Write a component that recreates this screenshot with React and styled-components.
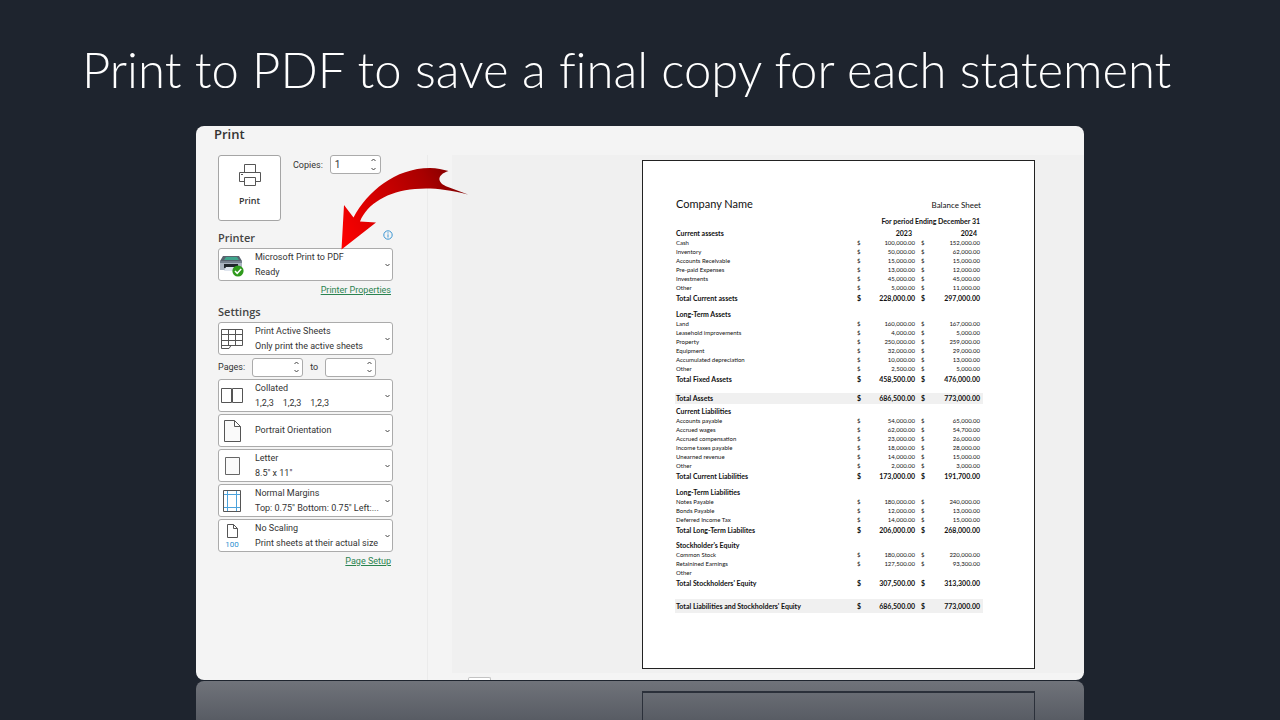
import React, { useState } from "react";
import styled, { createGlobalStyle } from "styled-components";

// styles
const GlobalStyle = createGlobalStyle`
  *, *::before, *::after {
    box-sizing: border-box;
  }
  body {
    margin: 0;
    background-color: #1e242e;
    font-family: "Open Sans", "Noto Sans", sans-serif;
  }
`;

const SlideStyle = styled.main`
  display: flex;
  flex-direction: column;
  height: 100vh;
  min-height: 700px;
  overflow: hidden;
  background-color: #1e242e;
`;

const TitleStyle = styled.h1`
  margin: 0;
  padding: 34px 82px 22px;
  font-family: Lato, sans-serif;
  font-size: 49px;
  font-weight: 300;
  font-variant-ligatures: none;
  line-height: 70px;
  white-space: nowrap;
  color: #ffffff;
`;

const WindowStyle = styled.section`
  position: relative;
  flex: none;
  display: flex;
  flex-direction: column;
  width: calc(100% - 32px);
  max-width: 888px;
  margin: 0 auto 1px;
  border-radius: 8px;
  overflow: hidden;
  background-color: #f4f4f4;
  color: #333333;
`;

const WindowTitleStyle = styled.h2`
  margin: 0;
  padding: 0 18px;
  height: 29px;
  font-size: 13px;
  font-weight: 600;
  line-height: 17px;
  color: #333333;
`;

const WindowBodyStyle = styled.div`
  display: flex;
`;

const SidebarStyle = styled.form`
  flex: none;
  display: flex;
  flex-direction: column;
  width: 232px;
  padding: 0 34px 0 22px;
  border-right: 1px solid #ebebeb;
  font-family: Roboto, "Open Sans", sans-serif;
`;

const PrintRowStyle = styled.div`
  display: flex;
  align-items: flex-start;
  gap: 12px;
`;

const PrintButtonStyle = styled.button`
  display: flex;
  flex-direction: column;
  align-items: center;
  gap: 7px;
  width: 63px;
  height: 66px;
  padding: 7px 0 0;
  border: 1px solid #a5a5a5;
  border-radius: 3px;
  background-color: #ffffff;
  font-family: "Open Sans", sans-serif;
  font-size: 9px;
  font-weight: 600;
  line-height: 14px;
  color: #333333;
`;

const FieldStyle = styled.div`
  display: flex;
  align-items: center;
  gap: 7px;
  font-size: 9px;
  line-height: 12px;
`;

const PagesStyle = styled(FieldStyle)`
  height: 24px;
`;

const SpinnerStyle = styled.div`
  display: flex;
  width: 51px;
  height: 19px;
  border: 1px solid #ababab;
  border-radius: 3px;
  overflow: hidden;
  background-color: #ffffff;
  input {
    flex: 1;
    min-width: 0;
    padding: 0 0 0 4px;
    border: none;
    outline: none;
    background: none;
    font-family: inherit;
    font-size: 10px;
    color: #333333;
    appearance: textfield;
  }
  input::-webkit-inner-spin-button {
    appearance: none;
    margin: 0;
  }
`;

const StepsStyle = styled.div`
  display: flex;
  flex-direction: column;
  button {
    display: flex;
    align-items: center;
    justify-content: center;
    flex: 1;
    width: 12px;
    padding: 0;
    border: none;
    background: none;
  }
`;

const HeadingRowStyle = styled.div`
  display: flex;
  justify-content: space-between;
  height: 20px;
  margin-top: ${(props) => props.$gap}px;
`;

const HeadingStyle = styled.h3`
  margin: 0;
  font-family: "Open Sans", sans-serif;
  font-size: 11px;
  font-weight: 600;
  line-height: 20px;
  color: #444444;
`;

const DropdownStyle = styled.div`
  display: grid;
  grid-template-columns: 26px 1fr 10px;
  align-items: center;
  height: 33px;
  margin-bottom: ${(props) => (props.$last ? 0 : 2)}px;
  border: 1px solid #ababab;
  border-radius: 3px;
  background-color: #ffffff;
  font-size: 9px;
  svg, p {
    pointer-events: none;
  }
  svg {
    grid-area: 1 / 1 / 2 / 2;
    justify-self: center;
    z-index: 1;
  }
  svg:last-child {
    grid-area: 1 / 3 / 2 / 4;
  }
  select {
    grid-area: 1 / 1 / 2 / 4;
    width: 100%;
    height: 100%;
    padding: 0 12px ${(props) => (props.$single ? 2 : 15)}px 36px;
    border: none;
    outline: none;
    appearance: none;
    background: none;
    font-family: inherit;
    font-size: inherit;
    line-height: 14px;
    color: inherit;
  }
  p {
    grid-area: 1 / 2 / 2 / 4;
    margin: 0;
    padding: 15px 0 0 10px;
    line-height: 14px;
    white-space: pre;
  }
`;

const LinkRowStyle = styled.div`
  display: flex;
  justify-content: flex-end;
  padding-right: 2px;
  a {
    font-size: 9px;
    line-height: 18px;
    color: #2b8350;
  }
`;

const PreviewStyle = styled.div`
  flex: 1;
  display: flex;
  flex-direction: column;
  padding-left: 24px;
`;

const PreviewAreaStyle = styled.div`
  display: flex;
  justify-content: flex-end;
  padding: 5px 49px 4px 24px;
  background-color: #f0f0f0;
`;

const PageTabStyle = styled.div`
  width: 23px;
  height: 3px;
  margin: 4px 0 0 16px;
  border: 1px solid #c3c3c3;
  border-bottom: none;
  border-radius: 2px 2px 0 0;
  background-color: #ffffff;
`;

const PaperStyle = styled.article`
  width: 393px;
  min-height: 509px;
  padding: 34px 51px 0 32px;
  border: 1px solid #222222;
  background-color: #ffffff;
  font-family: Lato, "Open Sans", sans-serif;
  color: #111111;
`;

const PaperHeadStyle = styled.header`
  display: flex;
  justify-content: space-between;
  align-items: baseline;
  padding: 0 2px 0 1px;
  h4, p {
    margin: 0;
    font-weight: 400;
    line-height: 17px;
  }
  h4 {
    font-size: 11px;
  }
  p {
    font-size: 8px;
  }
`;

const PeriodStyle = styled.p`
  margin: 0;
  padding-right: 3px;
  font-size: 7px;
  font-weight: 700;
  line-height: 14px;
  text-align: right;
`;

const TableStyle = styled.table`
  width: 100%;
  table-layout: fixed;
  border-collapse: collapse;
  th, td {
    padding: 0;
    white-space: nowrap;
  }
`;

const ROW_HEIGHTS = { head: 10, item: 9, total: 12, grand: 11, final: 14 };

const RowStyle = styled.tr`
  height: ${(props) => ROW_HEIGHTS[props.$kind]}px;
  background-color: ${(props) =>
    props.$kind === "grand" || props.$kind === "final" ? "#f0f0f0" : "transparent"};
  font-size: ${(props) => (props.$kind === "item" ? 6 : 7)}px;
  line-height: ${(props) => ROW_HEIGHTS[props.$kind]}px;
  th, td {
    font-weight: ${(props) => (props.$kind === "item" ? 400 : 700)};
  }
`;

const SpacerStyle = styled.tr`
  height: ${(props) => props.$size}px;
`;

const LabelStyle = styled.th`
  text-align: left;
  &&& {
    padding-left: 1px;
  }
`;

const SignStyle = styled.td`
  text-align: left;
  &&& {
    padding-left: ${(props) => props.$indent || 0}px;
  }
`;

const AmountStyle = styled.td`
  text-align: right;
  &&& {
    padding-right: ${(props) => props.$inset || 0}px;
  }
`;

const ArrowStyle = styled.svg`
  position: absolute;
  top: 38px;
  left: 140px;
  pointer-events: none;
`;

const ReflectionStyle = styled.div`
  flex: 1;
  display: flex;
  justify-content: flex-end;
  width: calc(100% - 32px);
  max-width: 888px;
  margin: 0 auto;
  padding: 10px 49px 0;
  border-radius: 8px 8px 0 0;
  background-image: linear-gradient(#70737a, #585c64);
`;

const ReflectedPaperStyle = styled.div`
  width: 393px;
  border: 1px solid #2b303a;
  border-top-width: 2px;
  border-bottom: none;
`;

// Component variables
const SETTINGS = [
  { label: "Collation", value: "Collated", detail: "1,2,3    1,2,3    1,2,3", icon: "collated" },
  { label: "Orientation", value: "Portrait Orientation", icon: "portrait" },
  { label: "Paper size", value: "Letter", detail: "8.5\" x 11\"", icon: "letter" },
  { label: "Margins", value: "Normal Margins", detail: "Top: 0.75\" Bottom: 0.75\" Left:...", icon: "margins" },
  { label: "Scaling", value: "No Scaling", detail: "Print sheets at their actual size", icon: "scaling" },
];

// [kind, label, 2023, 2024], a number stands for an empty row of that height
const ROWS = [
  ["item", "Cash", "100,000.00", "152,000.00"],
  ["item", "Inventory", "50,000.00", "62,000.00"],
  ["item", "Accounts Receivable", "15,000.00", "15,000.00"],
  ["item", "Pre-paid Expenses", "13,000.00", "12,000.00"],
  ["item", "Investments", "45,000.00", "45,000.00"],
  ["item", "Other", "5,000.00", "11,000.00"],
  ["total", "Total Current assets", "228,000.00", "297,000.00"],
  5,
  ["head", "Long-Term Assets"],
  ["item", "Land", "160,000.00", "167,000.00"],
  ["item", "Leasehold improvements", "4,000.00", "5,000.00"],
  ["item", "Property", "250,000.00", "259,000.00"],
  ["item", "Equipment", "32,000.00", "29,000.00"],
  ["item", "Accumulated depreciation", "10,000.00", "13,000.00"],
  ["item", "Other", "2,500.00", "5,000.00"],
  ["total", "Total Fixed Assets", "458,500.00", "476,000.00"],
  8,
  ["grand", "Total Assets", "686,500.00", "773,000.00"],
  2,
  ["head", "Current Liabilities"],
  ["item", "Accounts payable", "54,000.00", "65,000.00"],
  ["item", "Accrued wages", "62,000.00", "54,700.00"],
  ["item", "Accrued compensation", "23,000.00", "26,000.00"],
  ["item", "Income taxes payable", "18,000.00", "28,000.00"],
  ["item", "Unearned revenue", "14,000.00", "15,000.00"],
  ["item", "Other", "2,000.00", "3,000.00"],
  ["total", "Total Current Liabilities", "173,000.00", "191,700.00"],
  5,
  ["head", "Long-Term Liabilities"],
  ["item", "Notes Payable", "180,000.00", "240,000.00"],
  ["item", "Bonds Payable", "12,000.00", "13,000.00"],
  ["item", "Deferred Income Tax", "14,000.00", "15,000.00"],
  ["total", "Total Long-Term Liabilites", "206,000.00", "268,000.00"],
  4,
  ["head", "Stockholder's Equity"],
  ["item", "Common Stock", "180,000.00", "220,000.00"],
  ["item", "Retainined Earnings", "127,500.00", "93,300.00"],
  ["item", "Other"],
  ["total", "Total Stockholders' Equity", "307,500.00", "313,300.00"],
  10,
  ["final", "Total Liabilities and Stockholders' Equity", "686,500.00", "773,000.00"],
];

const ICONS = {
  printer: (
    <svg width="24" height="24" viewBox="0 0 24 24">
      <path d="M3 3h16l3 5H0z" fill="#59636e" />
      <path d="M6 4h11l2 3H4z" fill="#3fa58c" />
      <path d="M0 8h22v9H0z" fill="#aab3c0" />
      <path d="M0 8h22v2H0z" fill="#77818f" />
      <path d="M4 11h14v4H4z" fill="#20262c" />
      <path d="M6 14h10l1 4H4z" fill="#dfe5ee" />
      <circle cx="18" cy="18" r="5.600" fill="#2f9a1c" />
      <path d="M15 18l2.200 2.300 4-4.200" fill="none" stroke="#ffffff" strokeWidth="1.500" />
    </svg>
  ),
  sheets: (
    <svg width="22" height="20" viewBox="0 0 22 20" fill="none" stroke="#555555">
      <path d="M.5 .5h21v16H10l-2 3H.5zM.5 5.500h21M.5 11.500h21M7.500 .5v16M14.500 .5v16M.5 16.500H10" />
    </svg>
  ),
  collated: (
    <svg width="22" height="15" viewBox="0 0 22 15" fill="none" stroke="#555555">
      <path d="M.5 .5h10v14H.5zM11.500 .5h10v14h-10z" />
    </svg>
  ),
  portrait: (
    <svg width="17" height="22" viewBox="0 0 17 22" fill="#fafafa" stroke="#555555">
      <path d="M.5 .5h10l6 6v15H.5zM10.500 .5v6h6" />
    </svg>
  ),
  letter: (
    <svg width="15" height="18" viewBox="0 0 15 18" fill="#fafafa" stroke="#666666">
      <path d="M.5 .5h14v17H.5z" />
    </svg>
  ),
  margins: (
    <svg width="18" height="22" viewBox="0 0 18 22" fill="none">
      <path d="M4.500 1v20M13.500 1v20M1 4.500h16M1 17.500h16" stroke="#4da3dc" />
      <path d="M.5 .5h17v21H.5z" stroke="#555555" />
    </svg>
  ),
  scaling: (
    <svg width="16" height="24" viewBox="0 0 16 24" fill="none">
      <path d="M3.500 .5h6l4 4v9h-10zM9.500 .5v4h4" stroke="#555555" />
      <text x="8" y="23" textAnchor="middle" fontSize="8" fill="#2b8fd0">100</text>
    </svg>
  ),
};

const Chevron = ({ up }) => (
  <svg width="5" height="4" viewBox="0 0 5 4" fill="none" stroke="#444444">
    <path d={up ? "M.5 3l2-2 2 2" : "M.5 1l2 2 2-2"} />
  </svg>
);

const Spinner = ({ id, label, initial = "" }) => {
  const [value, setValue] = useState(initial);
  const step = (amount) => setValue(Math.max(1, Number(value) + amount));

  return (
    <SpinnerStyle>
      <input id={id} type="number" min="1" value={value} onChange={(e) => setValue(e.target.value)} />
      <StepsStyle>
        <button type="button" aria-label={`Increase ${label}`} onClick={() => step(1)}>
          <Chevron up />
        </button>
        <button type="button" aria-label={`Decrease ${label}`} onClick={() => step(-1)}>
          <Chevron />
        </button>
      </StepsStyle>
    </SpinnerStyle>
  );
};

const Dropdown = ({ label, value, detail, icon, last }) => (
  <DropdownStyle $single={!detail} $last={last}>
    {ICONS[icon]}
    <select aria-label={label} defaultValue={value}>
      <option>{value}</option>
    </select>
    {detail && <p>{detail}</p>}
    <Chevron />
  </DropdownStyle>
);

const Sidebar = () => (
  <SidebarStyle onSubmit={(e) => e.preventDefault()}>
    <PrintRowStyle>
      <PrintButtonStyle type="submit">
        <svg width="24" height="24" viewBox="0 0 24 24" fill="none" stroke="#555555">
          <path d="M6.500 9.500v-8h11v8M6.500 18.500h-5v-9h21v9h-5" />
          <path d="M6.500 14.500h11v8h-11z" fill="#ffffff" />
          <path d="M3 11.500h2" />
        </svg>
        Print
      </PrintButtonStyle>
      <FieldStyle>
        <label htmlFor="copies">Copies:</label>
        <Spinner id="copies" label="copies" initial="1" />
      </FieldStyle>
    </PrintRowStyle>

    <HeadingRowStyle $gap={7}>
      <HeadingStyle>Printer</HeadingStyle>
      <svg width="10" height="14" viewBox="0 0 10 14" fill="none" stroke="#3c96d2">
        <circle cx="5" cy="7" r="4.200" />
        <path d="M5 6.300v3.200M5 4.300v1.200" />
      </svg>
    </HeadingRowStyle>
    <Dropdown label="Printer" value="Microsoft Print to PDF" detail="Ready" icon="printer" last />
    <LinkRowStyle>
      <a href="#printer-properties">Printer Properties</a>
    </LinkRowStyle>

    <HeadingRowStyle $gap={3}>
      <HeadingStyle>Settings</HeadingStyle>
    </HeadingRowStyle>
    <Dropdown label="Print what" value="Print Active Sheets" detail="Only print the active sheets" icon="sheets" last />
    <PagesStyle>
      <label htmlFor="from">Pages:</label>
      <Spinner id="from" label="first page" />
      <label htmlFor="to">to</label>
      <Spinner id="to" label="last page" />
    </PagesStyle>
    {SETTINGS.map((setting, index) => (
      <Dropdown key={setting.label} {...setting} last={index === SETTINGS.length - 1} />
    ))}
    <LinkRowStyle>
      <a href="#page-setup">Page Setup</a>
    </LinkRowStyle>
  </SidebarStyle>
);

const BalanceSheet = () => (
  <PaperStyle>
    <PaperHeadStyle>
      <h4>Company Name</h4>
      <p>Balance Sheet</p>
    </PaperHeadStyle>
    <PeriodStyle>For period Ending December 31</PeriodStyle>
    <TableStyle>
      <colgroup>
        <col />
        <col width="10" />
        <col width="48" />
        <col width="14" />
        <col width="54" />
      </colgroup>
      <thead>
        <RowStyle $kind="head">
          <LabelStyle scope="col">Current assests</LabelStyle>
          <td />
          <AmountStyle as="th" scope="col" $inset={3}>2023</AmountStyle>
          <td />
          <AmountStyle as="th" scope="col" $inset={6}>2024</AmountStyle>
        </RowStyle>
      </thead>
      <tbody>
        {ROWS.map((row, index) => {
          if (typeof row === "number") {
            return (
              <SpacerStyle key={index} $size={row}>
                <td colSpan="5" />
              </SpacerStyle>
            );
          }
          const [kind, label, first, second] = row;
          return (
            <RowStyle key={index} $kind={kind}>
              <LabelStyle scope="row">{label}</LabelStyle>
              <SignStyle>{first && "$"}</SignStyle>
              <AmountStyle>{first}</AmountStyle>
              <SignStyle $indent={6}>{second && "$"}</SignStyle>
              <AmountStyle $inset={3}>{second}</AmountStyle>
            </RowStyle>
          );
        })}
      </tbody>
    </TableStyle>
  </PaperStyle>
);

const Arrow = () => (
  <ArrowStyle width="134" height="90" viewBox="336 164 134 90" aria-hidden="true">
    <defs>
      <linearGradient id="arrow-red" x1="342" y1="249" x2="467" y2="180" gradientUnits="userSpaceOnUse">
        <stop offset="0" stopColor="#ff0000" />
        <stop offset="0.3" stopColor="#dd0000" />
        <stop offset="0.75" stopColor="#a80000" />
        <stop offset="1" stopColor="#780000" />
      </linearGradient>
    </defs>
    <path
      fill="url(#arrow-red)"
      d="M341.500 249.500L344 205L353.500 217.500C367 192 395 168 430 168C437 168 443 169.500 448.500 171C436 175 437 183 448 187L468 194.500C446 189 430 187.500 415 189C388 191 367 204 360 221.500L376 222.500Z"
    />
  </ArrowStyle>
);

const App = () => {
  return (
    <SlideStyle>
      <GlobalStyle />
      <TitleStyle>Print to PDF to save a final copy for each statement</TitleStyle>
      <WindowStyle>
        <WindowTitleStyle>Print</WindowTitleStyle>
        <WindowBodyStyle>
          <Sidebar />
          <PreviewStyle>
            <PreviewAreaStyle>
              <BalanceSheet />
            </PreviewAreaStyle>
            <PageTabStyle />
          </PreviewStyle>
        </WindowBodyStyle>
        <Arrow />
      </WindowStyle>
      <ReflectionStyle aria-hidden="true">
        <ReflectedPaperStyle />
      </ReflectionStyle>
    </SlideStyle>
  );
};

export default App;
